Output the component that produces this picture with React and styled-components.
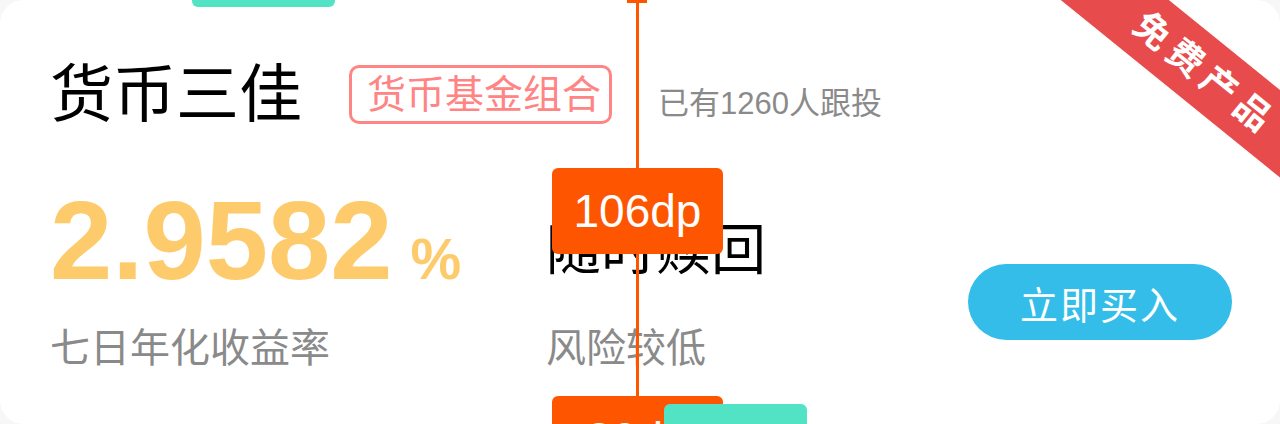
import styled, { createGlobalStyle } from "styled-components";

const GlobalStyle = createGlobalStyle`
  body {
    margin: 0;
    background: #f7f7f7;
    font-family: "Liberation Sans", "Noto Sans CJK SC", sans-serif;
  }
`;

const Card = styled.div`
  position: relative;
  box-sizing: border-box;
  width: 1280px;
  height: 424px;
  padding-left: 50px;
  background: #fff;
  border-radius: 24px;
  overflow: hidden;
`;

const Header = styled.div`
  display: flex;
  align-items: center;
  height: 63px;
  padding-top: 63px;
`;

const Title = styled.div`
  font-size: 63px;
  line-height: 63px;
  color: #000;
`;

const Tag = styled.div`
  margin-left: 47px;
  padding: 0 8px 0 15px;
  height: 53px;
  line-height: 53px;
  font-size: 39px;
  color: #ff8484;
  border: 3px solid #ff8585;
  border-radius: 10px;
`;

const Followers = styled.div`
  margin-left: 46px;
  margin-top: 18px;
  font-size: 31px;
  line-height: 31px;
  color: #8a8a8a;
`;

const Body = styled.div`
  display: flex;
  align-items: flex-start;
  margin-top: 59px;
`;

const Column = styled.div`
  display: flex;
  flex-direction: column;
  width: ${(p) => p.$width || "auto"};
`;

const Rate = styled.div`
  display: flex;
  align-items: baseline;
  height: 112px;
  color: #fdcb6b;
  font-weight: 700;
`;

const RateValue = styled.span`
  font-size: 112px;
  line-height: 112px;
`;

const Percent = styled.span`
  margin-left: 18px;
  font-size: 57px;
`;

const Feature = styled.div`
  margin-top: 38px;
  font-size: 55px;
  line-height: 55px;
  color: #000;
`;

const Caption = styled.div`
  margin-top: ${(p) => p.$top}px;
  font-size: 40px;
  line-height: 40px;
  color: #8a8a8a;
`;

const BuyButton = styled.button`
  margin: 79px 48px 0 auto;
  width: 264px;
  height: 76px;
  border: none;
  border-radius: 38px;
  background: #35bde9;
  color: #fff;
  font-family: inherit;
  font-size: 38px;
  letter-spacing: 2px;
`;

const Ribbon = styled.div`
  position: absolute;
  left: 1000px;
  top: 35px;
  width: 400px;
  height: 68px;
  line-height: 70px;
  background: #e84b4b;
  color: #fff;
  text-align: center;
  font-size: 36px;
  font-weight: 700;
  letter-spacing: 7px;
  text-indent: 14px;
  transform: rotate(39deg);
`;

/* measurement overlay from the design tool */
const GuideLine = styled.div`
  position: absolute;
  left: 636px;
  top: 0;
  width: 3px;
  height: 400px;
  background: #fe5500;
`;

const GuideCap = styled.div`
  position: absolute;
  left: 627px;
  top: 0;
  width: 20px;
  height: 3px;
  background: #fe5500;
`;

const GuideLabel = styled.div`
  position: absolute;
  left: 552px;
  top: ${(p) => p.$top}px;
  width: 171px;
  height: 86px;
  line-height: 86px;
  border-radius: 6px;
  background: #fe5500;
  color: #fff;
  text-align: center;
  font-size: 46px;
`;

const Marker = styled.div`
  position: absolute;
  left: ${(p) => p.$left}px;
  top: ${(p) => p.$top}px;
  width: 143px;
  height: 30px;
  border-radius: 6px;
  background: #52e3c4;
`;

export default function App() {
  return (
    <>
      <GlobalStyle />
      <Card>
        <Header>
          <Title>货币三佳</Title>
          <Tag>货币基金组合</Tag>
          <Followers>已有1260人跟投</Followers>
        </Header>
        <Body>
          <Column $width="496px">
            <Rate>
              <RateValue>2.9582</RateValue>
              <Percent>%</Percent>
            </Rate>
            <Caption $top={31}>七日年化收益率</Caption>
          </Column>
          <Column>
            <Feature>随时赎回</Feature>
            <Caption $top={50}>风险较低</Caption>
          </Column>
          <BuyButton>立即买入</BuyButton>
        </Body>
        <Ribbon>免费产品</Ribbon>
        <Marker $left={192} $top={-23} />
        <GuideLine />
        <GuideCap />
        <GuideLabel $top={168}>106dp</GuideLabel>
        <GuideLabel $top={396}>30dp</GuideLabel>
        <Marker $left={664} $top={404} />
      </Card>
    </>
  );
}
